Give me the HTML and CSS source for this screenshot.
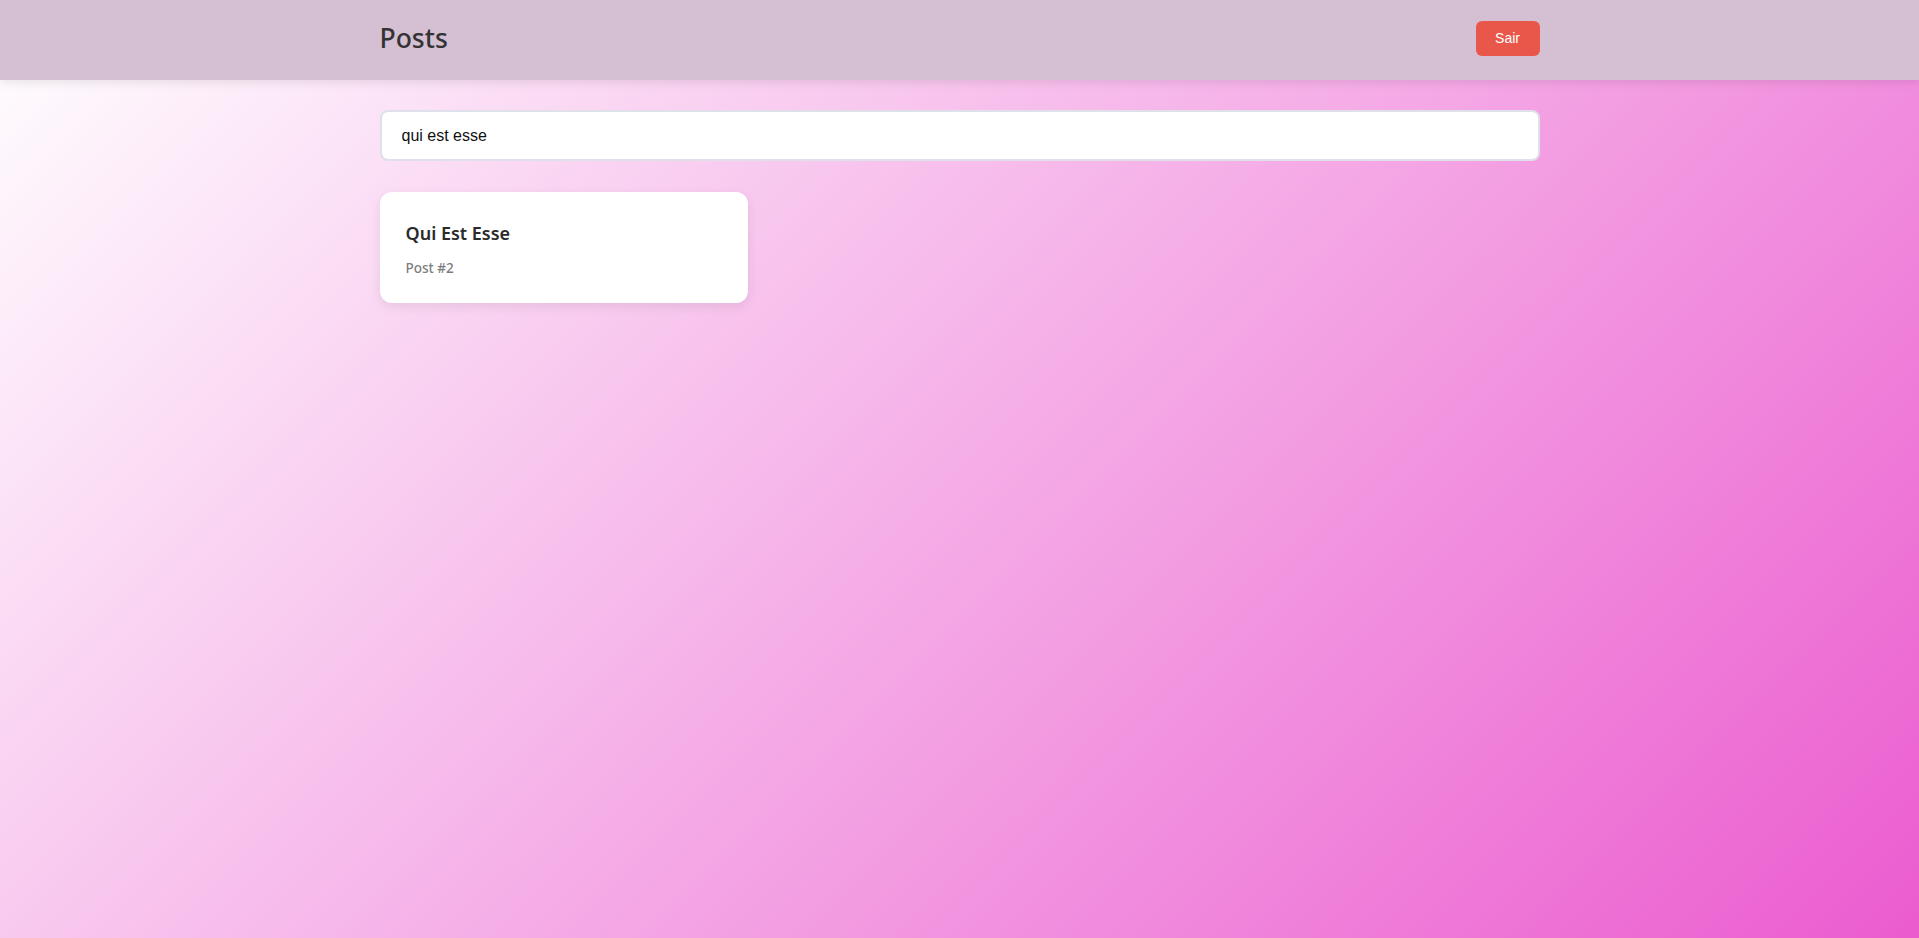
FILE: index.html
```html
<!DOCTYPE html>
<html lang="pt">
<head>
<meta charset="utf-8">
<title>Posts</title>
<link rel="stylesheet" href="styles.css">
</head>
<body>
<header class="topbar">
  <div class="topbar-inner">
    <h1 class="title">Posts</h1>
    <button class="logout">Sair</button>
  </div>
</header>
<main class="content">
  <input class="search" type="text" value="qui est esse">
  <div class="grid">
    <article class="card">
      <h2 class="card-title">Qui Est Esse</h2>
      <p class="card-meta">Post #2</p>
    </article>
  </div>
</main>
</body>
</html>
```
FILE: styles.css
```css
html, body {
  margin: 0;
  padding: 0;
  min-height: 100%;
}
body {
  min-height: 938px;
  background: linear-gradient(135deg, #ffffff 0%, #eb5ccf 100%);
  font-family: "Segoe UI", "Noto Sans", "Open Sans", sans-serif;
}
.topbar {
  background: #d5bfd3;
  height: 80px;
  box-shadow: 0 2px 10px rgba(0, 0, 0, 0.1);
}
.topbar-inner {
  max-width: 1160px;
  margin: 0 auto;
  height: 100%;
  display: flex;
  align-items: center;
  justify-content: space-between;
}
.title {
  margin: 0;
  font-size: 26.5px;
  font-weight: 500;
  color: #333;
  position: relative;
  top: -2px;
}
.logout {
  width: 64px;
  height: 35px;
  border: none;
  border-radius: 6px;
  background: #e8574a;
  color: #fff;
  font-family: "Liberation Sans", Arial, sans-serif;
  font-size: 14px;
  cursor: pointer;
  position: relative;
  top: -2px;
}
.content {
  max-width: 1160px;
  margin: 0 auto;
  padding-top: 30px;
}
.search {
  display: block;
  box-sizing: border-box;
  width: 100%;
  height: 51px;
  padding: 0 20px;
  border: 2px solid #dfe0ea;
  border-radius: 8px;
  background: #fff;
  font-family: "Liberation Sans", Arial, sans-serif;
  font-size: 16px;
  color: #111;
  outline: none;
}
.grid {
  display: grid;
  grid-template-columns: repeat(auto-fill, 368px);
  gap: 20px;
  margin-top: 31px;
}
.card {
  box-sizing: border-box;
  height: 111px;
  background: #fff;
  border-radius: 12px;
  padding: 29px 26px 0;
  box-shadow: 0 4px 12px rgba(0, 0, 0, 0.08);
}
.card-title {
  margin: 0;
  font-size: 18px;
  font-weight: 600;
  color: #2b2b2b;
  line-height: 1.4;
}
.card-meta {
  margin: 13px 0 0;
  font-size: 13.5px;
  color: #7d7d7d;
  font-weight: 500;
}
```
